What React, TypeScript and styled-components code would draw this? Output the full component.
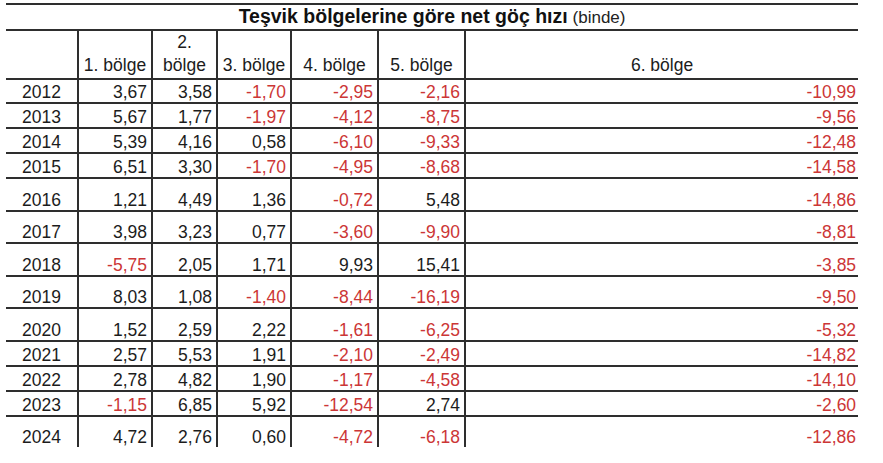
import React from 'react';
import styled, { createGlobalStyle } from 'styled-components';

const GlobalStyle = createGlobalStyle`
  * {
    box-sizing: border-box;
  }
  body {
    margin: 0;
    background: #ffffff;
    color: #1c1c1c;
    font-family: 'Liberation Sans', Arial, sans-serif;
  }
`;

const widths = [73, 74, 65, 74, 87, 87, 392];

const headers = [[''], ['1. bölge'], ['2.', 'bölge'], ['3. bölge'], ['4. bölge'], ['5. bölge'], ['6. bölge']];

const rows: { year: string; h: number; values: string[] }[] = [
  { year: '2012', h: 24, values: ['3,67', '3,58', '-1,70', '-2,95', '-2,16', '-10,99'] },
  { year: '2013', h: 25, values: ['5,67', '1,77', '-1,97', '-4,12', '-8,75', '-9,56'] },
  { year: '2014', h: 25, values: ['5,39', '4,16', '0,58', '-6,10', '-9,33', '-12,48'] },
  { year: '2015', h: 25, values: ['6,51', '3,30', '-1,70', '-4,95', '-8,68', '-14,58'] },
  { year: '2016', h: 33, values: ['1,21', '4,49', '1,36', '-0,72', '5,48', '-14,86'] },
  { year: '2017', h: 32, values: ['3,98', '3,23', '0,77', '-3,60', '-9,90', '-8,81'] },
  { year: '2018', h: 33, values: ['-5,75', '2,05', '1,71', '9,93', '15,41', '-3,85'] },
  { year: '2019', h: 32, values: ['8,03', '1,08', '-1,40', '-8,44', '-16,19', '-9,50'] },
  { year: '2020', h: 33, values: ['1,52', '2,59', '2,22', '-1,61', '-6,25', '-5,32'] },
  { year: '2021', h: 25, values: ['2,57', '5,53', '1,91', '-2,10', '-2,49', '-14,82'] },
  { year: '2022', h: 25, values: ['2,78', '4,82', '1,90', '-1,17', '-4,58', '-14,10'] },
  { year: '2023', h: 25, values: ['-1,15', '6,85', '5,92', '-12,54', '2,74', '-2,60'] },
  { year: '2024', h: 30, values: ['4,72', '2,76', '0,60', '-4,72', '-6,18', '-12,86'] },
];

export default function App() {
  return (
    <>
      <GlobalStyle />
      <Sheet>
        <colgroup>
          {widths.map((w, i) => (
            <col key={i} style={{ width: w }} />
          ))}
        </colgroup>
        <thead>
          <TitleRow>
            <TitleCell colSpan={7}>
              <strong>Teşvik bölgelerine göre net göç hızı</strong> <small>(binde)</small>
            </TitleCell>
          </TitleRow>
          <HeadRow>
            {headers.map((lines, i) => (
              <HeadCell key={i} $last={i === headers.length - 1}>
                {lines.map((l, j) => (
                  <HeadLine key={j}>{l}</HeadLine>
                ))}
              </HeadCell>
            ))}
          </HeadRow>
        </thead>
        <tbody>
          {rows.map((r, ri) => (
            <Row key={r.year} $h={r.h}>
              <YearCell $bottom={ri < rows.length - 1}>{r.year}</YearCell>
              {r.values.map((v, i) => (
                <NumCell
                  key={i}
                  $neg={v.startsWith('-')}
                  $last={i === r.values.length - 1}
                  $bottom={ri < rows.length - 1}
                >
                  {v}
                </NumCell>
              ))}
            </Row>
          ))}
        </tbody>
      </Sheet>
    </>
  );
}

const Sheet = styled.table`
  margin: 3px 0 0 6px;
  width: 852px;
  table-layout: fixed;
  border-collapse: separate;
  border-spacing: 0;
  font-size: 17.5px;
`;

const TitleRow = styled.tr`
  height: 28px;
`;

const TitleCell = styled.th`
  border-top: 2px solid #2e2e2e;
  border-bottom: 2px solid #2e2e2e;
  padding: 0;
  text-align: center;
  vertical-align: bottom;
  line-height: 22px;
  strong {
    font-size: 19.5px;
    font-weight: bold;
    color: #111;
  }
  small {
    font-size: 17px;
    font-weight: normal;
    color: #222;
  }
`;

const HeadRow = styled.tr`
  height: 49px;
`;

const HeadCell = styled.th<{ $last?: boolean }>`
  border-bottom: 2px solid #2e2e2e;
  border-right: ${(p) => (p.$last ? 'none' : '2px solid #2e2e2e')};
  padding: 0 0 1px;
  text-align: center;
  vertical-align: bottom;
  font-weight: normal;
  line-height: 23px;
  white-space: nowrap;
`;

const HeadLine = styled.div``;

const Row = styled.tr<{ $h: number }>`
  height: ${(p) => p.$h}px;
`;

const YearCell = styled.td<{ $bottom?: boolean }>`
  border-bottom: ${(p) => (p.$bottom ? '2px solid #2e2e2e' : 'none')};
  border-right: 2px solid #2e2e2e;
  padding: 0;
  text-align: center;
  vertical-align: bottom;
  line-height: 20px;
`;

const NumCell = styled.td<{ $neg?: boolean; $last?: boolean; $bottom?: boolean }>`
  border-bottom: ${(p) => (p.$bottom ? '2px solid #2e2e2e' : 'none')};
  border-right: ${(p) => (p.$last ? 'none' : '2px solid #2e2e2e')};
  padding: 0 ${(p) => (p.$last ? '2px' : '4px')} 0 0;
  text-align: right;
  vertical-align: bottom;
  line-height: 20px;
  color: ${(p) => (p.$neg ? '#cc3636' : '#1c1c1c')};
  white-space: nowrap;
`;
